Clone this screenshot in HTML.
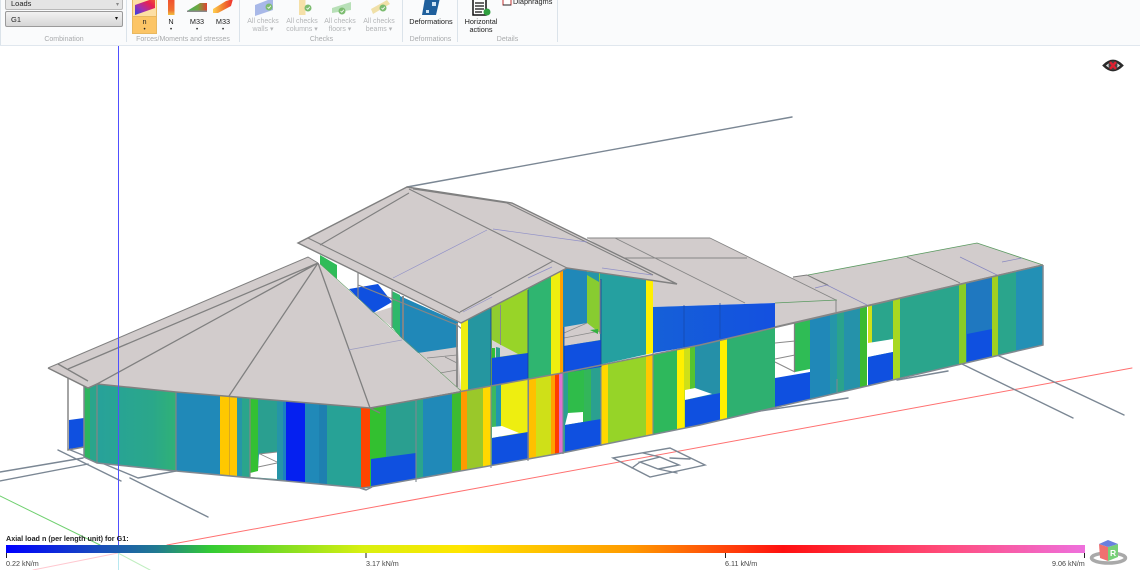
<!DOCTYPE html>
<html><head><meta charset="utf-8"><style>
html,body{margin:0;padding:0;background:#fff}
#p{position:relative;width:1140px;height:570px;overflow:hidden;background:#fff;font-family:"Liberation Sans",sans-serif;filter:blur(.3px)}
#tb{position:absolute;left:0;top:0;width:1140px;height:45px;background:#fafbfc;border-bottom:1.5px solid #e0e7ee;box-sizing:content-box}
.t{position:absolute;font-size:7.300px;line-height:8px;color:#222;text-align:center;white-space:nowrap}
.d{color:#b4b6b8;font-size:7px}
.g{color:#a9abad;font-size:7px}
.sep{position:absolute;top:0;width:1px;height:42px;background:#dbe3ea}
.dd{position:absolute;left:5px;width:118px;border:1px solid #9a9a9a;border-radius:2px;background:linear-gradient(#f2f2f2,#d6d6d6);box-sizing:border-box;font-size:7.500px;color:#222;padding-left:5px}
svg{position:absolute;left:0;top:0}
</style></head><body><div id="p">
<svg width="1140" height="570" viewBox="0 0 1140 570">
<defs>
<linearGradient id="lg" x1="0" x2="1" y1="0" y2="0">
<stop offset="0" stop-color="#0000ff"/><stop offset=".09" stop-color="#1a50b8"/><stop offset=".14" stop-color="#207a90"/><stop offset=".19" stop-color="#33cc33"/><stop offset=".33" stop-color="#d8f010"/><stop offset=".42" stop-color="#ffe600"/><stop offset=".58" stop-color="#ff9a00"/><stop offset=".72" stop-color="#ff1010"/><stop offset=".87" stop-color="#ff4c7c"/><stop offset="1" stop-color="#ee70dd"/>
</linearGradient>
<linearGradient id="w1" x1="0" x2="1" y1="0" y2="0"><stop offset="0" stop-color="#27a29a"/><stop offset=".7" stop-color="#2aa78a"/><stop offset="1" stop-color="#30b276"/></linearGradient>
<linearGradient id="w2" x1="0" x2="1" y1="0" y2="0"><stop offset="0" stop-color="#1560d8"/><stop offset="1" stop-color="#1450e0"/></linearGradient>
<linearGradient id="ni" x1="0" x2="1" y1="1" y2="0"><stop offset="0" stop-color="#3040e0"/><stop offset=".35" stop-color="#a030b0"/><stop offset=".7" stop-color="#e82050"/><stop offset="1" stop-color="#f06030"/></linearGradient>
<linearGradient id="nv" x1="0" x2="0" y1="0" y2="1"><stop offset="0" stop-color="#f05030"/><stop offset=".7" stop-color="#f07030"/><stop offset="1" stop-color="#f0c040"/></linearGradient>
<linearGradient id="m1" x1="0" x2="1" y1="0" y2="0"><stop offset="0" stop-color="#40b060"/><stop offset=".55" stop-color="#70a840"/><stop offset="1" stop-color="#e04030"/></linearGradient>
<linearGradient id="m2" x1="0" x2="1" y1="0" y2="0"><stop offset="0" stop-color="#ffd050"/><stop offset=".5" stop-color="#f08030"/><stop offset="1" stop-color="#f03030"/></linearGradient>
<clipPath id="ca"><polygon points="84,386 97,384 176,392 370,408 370,487 362,488 176,471 97,463 84,457"/></clipPath>
<clipPath id="cb"><polygon points="370,408 562,373 700,345 1043,265 1043,345 700,425 562,453 370,487"/></clipPath>
<clipPath id="cu"><polygon points="461,323 568,268 653,281 653,353 562,373 461,392"/></clipPath>
</defs>

<!-- ground lines -->
<g fill="none" stroke-linecap="round">
<path d="M1132 368L167 545" stroke="#ff7070" stroke-width="1"/>
<path d="M118 553L33 570" stroke="#ffc8d0" stroke-width="1"/>
<path d="M0 496L100 545" stroke="#70d070" stroke-width="1"/>
<path d="M118 553L150 570" stroke="#c0eec0" stroke-width="1"/>
<g stroke="#7b8794" stroke-width="1.400">
<path d="M407 187L792 117"/>
<path d="M58 450L121 481M68 449L138 478M130 478L208 517M138 478L176 471M0 472L83 458M0 481L88 464"/>
<path d="M962 364L1073 418M997 355L1124 415"/>
<path d="M720 417L848 398M897 380L948 371"/>
<path d="M613 458L670 448 705 465 650 477ZM640 462L660 457 679 465 658 469ZM643 453L660 457M632 468L640 462M658 469L677 473M670 458L690 459"/>
</g>
</g>

<!-- far left column -->
<polygon points="69,420 84,418 84,447 69,449" fill="#0f50e0"/>
<path d="M68 378V450L84 447" stroke="#868686" stroke-width="1.500" fill="none"/>

<!-- Rear parts behind the hip -->
<polygon points="320,255 337,265 337,279 320,264" fill="#2fbc58"/>
<polygon points="349,289 378,284 392,302 373,313" fill="#0f50e0"/>
<polygon points="373,313 392,307 392,327" fill="#d2cccc"/>
<polygon points="392,291 400,295 400,337 392,327" fill="#2eb86a"/>
<polygon points="400,296 458,322 458,352 418,353 400,337" fill="#2088b8"/>
<polygon points="418,353 458,347 461,392" fill="#d2cccc"/>
<path d="M358 273V298M392 290V328M358 285L457 325 472 337" stroke="#868686" stroke-width="1.200" fill="none"/>
<path d="M403 296V340M457 323V387M472 337V397L460 390" stroke="#868686" stroke-width="1.800" fill="none"/>
<path d="M427 358L457 355M440 373L457 370M445 357L457 363" stroke="#868686" stroke-width=".8" fill="none"/>

<!-- back right roof -->
<polygon points="587,238 710,238 837,300 837,308 775,327 775,303 653,307 653,281" fill="#d2cccc"/>
<polygon points="793,277 808,275 977,243 1043,265 775,327" fill="#d2cccc"/>
<polygon points="653,307 775,303 775,327 700,345 653,353" fill="url(#w2)"/>
<path d="M684 305V347M720 303V338" stroke="#1848a8" stroke-width=".7"/>
<path d="M710 238L836 300M587 238H710M615 238L745 303M623 258H747" stroke="#868686" stroke-width=".9" fill="none"/>
<path d="M775 303L837 300M808 275L977 243 1043 265" stroke="#5a9a60" stroke-width=".8" fill="none"/>
<path d="M793 277L807 275 828 285M807 275L829 286M836 300V312M907 257L960 283" stroke="#7c7c7c" stroke-width=".9" fill="none"/>
<path d="M815 288L827 285 867 305M960 257L997 275M1002 262L1022 258" stroke="#8888c0" stroke-width=".7" fill="none"/>
<path d="M775 327L1043 265" stroke="#868686" stroke-width="1.600" fill="none"/>

<!-- Ground floor right walls -->
<g clip-path="url(#cb)" shape-rendering="crispEdges">
<rect x="370" y="340" width="16" height="160" fill="#33c030"/>
<rect x="386" y="340" width="30" height="160" fill="#2a9f90"/>
<rect x="416" y="340" width="7" height="160" fill="#2aa58c"/>
<rect x="423" y="340" width="29" height="160" fill="#2089b8"/>
<rect x="452" y="340" width="9" height="160" fill="#3dbb30"/>
<rect x="461" y="340" width="6" height="160" fill="#ff9a00"/>
<rect x="467" y="340" width="16" height="160" fill="#9ac82a"/>
<rect x="483" y="340" width="8" height="160" fill="#ffd800"/>
<rect x="491" y="340" width="5" height="160" fill="#3cb860"/>
<rect x="496" y="340" width="5" height="160" fill="#2296b0"/>
<rect x="501" y="340" width="27" height="160" fill="#eeee10"/>
<rect x="528" y="340" width="1" height="160" fill="#808080"/>
<rect x="529" y="340" width="7" height="160" fill="#ffc000"/>
<rect x="536" y="340" width="15" height="160" fill="#cfe018"/>
<rect x="551" y="340" width="4" height="160" fill="#ffa000"/>
<rect x="555" y="340" width="4" height="160" fill="#ff3c00"/>
<rect x="559" y="340" width="4" height="160" fill="#e070d0"/>
<rect x="563" y="340" width="5" height="160" fill="#2aa090"/>
<rect x="568" y="340" width="16" height="160" fill="#2fbc4a"/>
<rect x="584" y="340" width="7" height="160" fill="#33b65a"/>
<rect x="591" y="340" width="10" height="160" fill="#2aa090"/>
<rect x="601" y="340" width="7" height="160" fill="#ffd800"/>
<rect x="608" y="340" width="38" height="160" fill="#96d428"/>
<rect x="646" y="340" width="7" height="160" fill="#ffc800"/>
<rect x="653" y="320" width="24" height="160" fill="#2eb85c"/>
<rect x="677" y="320" width="7" height="160" fill="#fff000"/>
<rect x="684" y="320" width="6" height="160" fill="#cfe018"/>
<rect x="690" y="320" width="5" height="160" fill="#55c430"/>
<rect x="695" y="320" width="25" height="160" fill="#2590a8"/>
<rect x="720" y="300" width="7" height="160" fill="#fff000"/>
<rect x="727" y="300" width="48" height="160" fill="#2eb070"/>
<rect x="775" y="300" width="20" height="160" fill="#fff"/>
<rect x="795" y="300" width="15" height="160" fill="#2fbc55"/>
<rect x="810" y="280" width="20" height="160" fill="#2088b8"/>
<rect x="830" y="280" width="7" height="160" fill="#2596a8"/>
<rect x="837" y="280" width="7" height="160" fill="#2aa38c"/>
<rect x="844" y="280" width="16" height="160" fill="#2592aa"/>
<rect x="860" y="280" width="7" height="160" fill="#3cbb30"/>
<rect x="868" y="280" width="4" height="160" fill="#cfe018"/>
<rect x="872" y="280" width="21" height="160" fill="#2aa58c"/>
<rect x="893" y="260" width="7" height="160" fill="#a8d820"/>
<rect x="900" y="260" width="59" height="160" fill="#2aa58c"/>
<rect x="959" y="250" width="7" height="160" fill="#88cc28"/>
<rect x="966" y="250" width="26" height="160" fill="#1f78c0"/>
<rect x="992" y="250" width="6" height="160" fill="#a0d020"/>
<rect x="998" y="250" width="18" height="160" fill="#2aa58c"/>
<rect x="1016" y="250" width="27" height="160" fill="#2390b5"/>
</g>
<g clip-path="url(#cb)">
<polygon points="371,459 416,453 416,500 371,500" fill="#0f50e0"/>
<polygon points="492,427 502,426 519,433 492,438" fill="#fff"/>
<polygon points="492,438 528,432 528,480 492,480" fill="#0f50e0"/>
<polygon points="568,413 583,412 583,422 565,425" fill="#fff"/>
<polygon points="565,425 601,419 601,470 565,470" fill="#0f50e0"/>
<polygon points="685,390 695,388 712,394 685,400" fill="#fff"/>
<polygon points="685,400 720,393 720,440 685,450" fill="#0f50e0"/>
<polygon points="795,372 810,369 810,372 795,376" fill="#fff"/>
<polygon points="775,378 810,372 810,420 775,420" fill="#0f50e0"/>
<polygon points="868,343 893,339 893,352 868,357" fill="#fff"/>
<polygon points="868,357 893,352 893,400 868,400" fill="#0f50e0"/>
<polygon points="967,334 992,329 992,380 967,380" fill="#0f50e0"/>
<path d="M775 343L795 341M775 359L795 355M775 362L795 372" stroke="#8a8a8a" stroke-width="1"/>
</g>
<path d="M794.500 323V372" stroke="#808080" stroke-width="1.300"/>
<path d="M837 379V392" stroke="#808890" stroke-width="1"/>
<path d="M416 398V482M491 387V468M528 380V461M563 373V454M601 365V446M653 353V434" stroke="#808890" stroke-width="1.100"/>

<!-- gable upper walls -->
<g clip-path="url(#cu)" shape-rendering="crispEdges">
<rect x="461" y="260" width="7" height="140" fill="#eeee10"/>
<rect x="468" y="260" width="23" height="140" fill="#2596a0"/>
<rect x="491" y="260" width="10" height="140" fill="#90cc30"/>
<rect x="501" y="260" width="27" height="140" fill="#98d428"/>
<rect x="528" y="260" width="23" height="140" fill="#2fb570"/>
<rect x="551" y="260" width="9" height="140" fill="#eeee10"/>
<rect x="560" y="260" width="3" height="140" fill="#ffa000"/>
<rect x="563" y="260" width="24" height="140" fill="#2088b8"/>
<rect x="587" y="260" width="13" height="140" fill="#88cc30"/>
<rect x="600" y="260" width="46" height="140" fill="#25a0a0"/>
<rect x="646" y="260" width="7" height="140" fill="#fff000"/>
</g>
<polygon points="587,272 599,272 599,282 587,275" fill="#2596a8"/>
<polygon points="564,327 587,323 600,333 600,340 564,346" fill="#d2cccc"/>
<path d="M564 338L600 331M587 323L564 333" stroke="#8a8a8a" stroke-width=".7"/>
<polygon points="590,330 598,329 598,334" fill="#33b040"/>
<polygon points="492,340 501,345 518,354 492,358" fill="#d8d4d4"/>
<polygon points="492,348 495,348 495,358 492,358" fill="#33c033"/>
<polygon points="496,347 500,348 500,357 496,358" fill="#2aa090"/>
<polygon points="492,358 528,353 528,379 492,386" fill="#0f50e0"/>
<polygon points="564,346 601,340 601,367 564,373" fill="#0f50e0"/>
<path d="M564 327V373M528 290V379M601 279V367M491 305V386" stroke="#1c3f98" stroke-width=".8" fill="none"/>
<path d="M500.500 305V345M600 280V334" stroke="#8a8a8a" stroke-width="1" fill="none"/>

<!-- left wall -->
<g clip-path="url(#ca)" shape-rendering="crispEdges">
<rect x="84" y="370" width="6" height="125" fill="#2db55f"/>
<rect x="90" y="370" width="7" height="125" fill="#2aa58c"/>
<rect x="97" y="370" width="79" height="125" fill="url(#w1)"/>
<rect x="176" y="370" width="44" height="125" fill="#2089b8"/>
<rect x="220" y="370" width="17" height="125" fill="#ffc800"/>
<rect x="229" y="370" width="1" height="125" fill="#d8a820"/>
<rect x="237" y="370" width="5" height="125" fill="#2696a8"/>
<rect x="242" y="370" width="8" height="125" fill="#2aa58c"/>
<rect x="250" y="370" width="8" height="125" fill="#33c033"/>
<rect x="258" y="370" width="19" height="125" fill="#2a9f90"/>
<rect x="277" y="370" width="6" height="125" fill="#2595a8"/>
<rect x="283" y="370" width="3" height="125" fill="#1c80c0"/>
<rect x="286" y="370" width="19" height="125" fill="#0520f0"/>
<rect x="305" y="370" width="14" height="125" fill="#2089b8"/>
<rect x="319" y="370" width="8" height="125" fill="#1e80b0"/>
<rect x="327" y="370" width="34" height="125" fill="#27a296"/>
<rect x="361" y="370" width="9" height="125" fill="#ff4400"/>
</g>
<polygon points="250,473 258,471 259,454 277,452 277,479 250,477" fill="#fff"/>
<path d="M258 467L277 463M260 454L277 462M259 454L277 452" stroke="#8a8a8a" stroke-width=".9" fill="none"/>
<path d="M84 386V457L97 463 176 471 362 488 370 487 562 453 700 425 1043 345V265" stroke="#808890" stroke-width="1.500" fill="none"/>
<path d="M97 384V463M176 392V471M250 398V477" stroke="#868686" stroke-width="1.200"/>
<path d="M370 408L562 373 700 345 1043 265" stroke="#868686" stroke-width="1.500" fill="none"/>
<path d="M360 488L366 490 372 487" stroke="#808890" stroke-width="1.500" fill="none"/>

<!-- hip roof -->
<polygon points="48,368 308,257 318,263 460,391 370,408 176,392 97,384 88,388" fill="#d2cccc"/>
<g fill="none" stroke="#808080">
<path d="M48 368L308 257 318 263" stroke-width="1"/>
<path d="M48 368L88 388 97 384 176 392 370 408 460 392" stroke-width="1.500"/>
<path d="M318 263L97 384M318 263L68 369M318 263L229 396M318 263L370 408 380 413M58 364L88 381" stroke-width="1.300"/>
<path d="M348 350L402 340" stroke="#9c9cc0" stroke-width=".7"/>
<path d="M320 264L460 390" stroke="#6a9a6a" stroke-width=".6"/>
</g>

<!-- main roof -->
<polygon points="298,243 407,187 512,203 677,284 567,268 461,323" fill="#d2cccc"/>
<g fill="none" stroke="#808080">
<path d="M298 243L407 187 512 203 677 284 567 268 461 323 298 243Z" stroke-width="1.400"/>
<path d="M308 238L460 313M320 245L409 193M409 189L567 268M413 189L507 203 653 275M460 312L553 261 567 268" stroke-width="1.100"/>
<path d="M393 278L487 230M493 229L587 242M463 312L492 297M528 278L552 267M602 268L652 275" stroke="#9090c8" stroke-width=".7"/>
</g>

<!-- vertical blue guide -->
<path d="M118.500 46V553" stroke="#5050ff" stroke-width="1"/>
<path d="M118.500 553V570" stroke="#b8e8f0" stroke-width="1"/>

<!-- legend -->
<rect x="6" y="545" width="1079" height="8" fill="url(#lg)"/>
<path d="M6.500 553V558M366 553V558M725.500 553V558M1084.500 553V558" stroke="#222" stroke-width="1"/>
<text x="6" y="541" font-size="7.200" font-weight="700" fill="#222" font-family="Liberation Sans">Axial load n (per length unit) for G1:</text>
<text x="6" y="566" font-size="7.200" fill="#444" font-family="Liberation Sans">0.22 kN/m</text>
<text x="366" y="566" font-size="7.200" fill="#444" font-family="Liberation Sans">3.17 kN/m</text>
<text x="725" y="566" font-size="7.200" fill="#444" font-family="Liberation Sans">6.11 kN/m</text>
<text x="1052" y="566" font-size="7.200" fill="#444" font-family="Liberation Sans">9.06 kN/m</text>

<!-- cube -->
<ellipse cx="1108.500" cy="558" rx="17" ry="5" fill="none" stroke="#a9a9a9" stroke-width="3.500"/>
<polygon points="1099,544 1108,547 1108,561 1100,558" fill="#f07070"/>
<polygon points="1108,547 1118,544 1118,557 1108,561" fill="#78d078"/>
<polygon points="1099,544 1108,540 1118,544 1108,547" fill="#6a80e0"/>
<text x="1110" y="556" font-size="8.500" font-weight="700" fill="#fff" font-family="Liberation Sans">R</text>

<!-- eye -->
<path d="M1104 65.500Q1113 56.500 1122 65.500 1113 74.500 1104 65.500Z" fill="#ddd" stroke="#2a2a2a" stroke-width="2.600"/>
<circle cx="1113" cy="65.500" r="4.500" fill="#444"/>
<path d="M1110 62L1116 69M1116 62L1110 69" stroke="#e02030" stroke-width="2.400"/>
</svg>

<div id="tb"></div>
<div style="position:absolute;left:0;top:0;width:1px;height:45px;background:#dbe3ea"></div>
<div class="dd" style="top:-4px;height:14px;line-height:14px;padding-left:5px;background:#e4e4e4;border-color:#b8b8b8">Loads</div>
<div class="t" style="left:116px;top:1px;color:#888;font-size:6px">▾</div>
<div class="dd" style="top:11px;height:16px;line-height:15px">G1</div>
<div class="t" style="left:115px;top:15px;font-size:6px;color:#111">▾</div>
<div class="sep" style="left:126px"></div>
<div class="sep" style="left:239px"></div>
<div class="sep" style="left:402px"></div>
<div class="sep" style="left:457px"></div>
<div class="sep" style="left:557px"></div>

<div style="position:absolute;left:132px;top:-3px;width:25px;height:37px;background:#fddfa4;border:1px solid #e8b860;border-radius:1px;box-sizing:border-box"></div>
<div style="position:absolute;left:132px;top:16px;width:25px;height:18px;background:#fcc566;border:1px solid #e8b860;box-sizing:border-box"></div>

<svg width="1140" height="46" viewBox="0 0 1140 46">
<!-- n -->
<polygon points="135,5 155,-2 155,8 135,15" fill="url(#ni)"/>
<!-- N -->
<rect x="168" y="-1" width="6.500" height="16" fill="url(#nv)"/>
<!-- M33 a -->
<polygon points="187,11 200,3 207,3 207,11" fill="url(#m1)"/>
<rect x="187" y="10.500" width="20" height="1.500" fill="#8a8a8a"/>
<!-- M33 b -->
<polygon points="213,9 226,1 233,-1 231,6 218,13 213,13" fill="url(#m2)"/>
<!-- checks -->
<polygon points="255,5 273,-2 273,10 255,16" fill="#a8b8e8"/>
<circle cx="269" cy="7" r="3.500" fill="#7cbc70"/><path d="M267.500 7L268.800 8.300 270.800 5.800" stroke="#fff" fill="none" stroke-width=".8"/>
<rect x="299" y="-2" width="6.500" height="17" fill="#f5e0a8"/>
<circle cx="308" cy="8" r="3.500" fill="#7cbc70"/><path d="M306.500 8L307.800 9.300 309.800 6.800" stroke="#fff" fill="none" stroke-width=".8"/>
<polygon points="332,8 351,2 351,10 332,13" fill="#b8e0b8"/>
<circle cx="342" cy="11" r="3.500" fill="#7cbc70"/><path d="M340.500 11L341.800 12.300 343.800 9.800" stroke="#fff" fill="none" stroke-width=".8"/>
<polygon points="371,9 387,0 390,4 373,14" fill="#f0e0a8"/>
<circle cx="383" cy="8" r="3.500" fill="#7cbc70"/><path d="M381.500 8L382.800 9.300 384.800 6.800" stroke="#fff" fill="none" stroke-width=".8"/>
<!-- deformations -->
<polygon points="425,-2 440,-2 436,15 422,15" fill="#1f5f9c"/>
<rect x="432" y="2" width="4" height="4" fill="#cfe4f5"/>
<rect x="426" y="10" width="3" height="3" fill="#cfe4f5"/>
<!-- horizontal actions -->
<rect x="473" y="-3" width="13" height="18" fill="#fff" stroke="#111" stroke-width="1.500"/>
<path d="M475 3H484M475 6H484M475 9H484M475 12H482" stroke="#111" stroke-width="1.200"/>
<circle cx="487" cy="12" r="3.500" fill="#30a040"/>
<!-- diaphragms -->
<rect x="503" y="-2" width="8" height="7" fill="#fff" stroke="#c03030" stroke-width="1"/>
<path d="M503 5H511" stroke="#222"/>
</svg>

<div class="t" style="left:132px;top:17.500px;width:25px">n</div>
<div class="t" style="left:132px;top:26px;width:25px;font-size:6px">•</div>
<div class="t" style="left:161px;top:17.500px;width:20px">N</div>
<div class="t" style="left:161px;top:26px;width:20px;font-size:6px">•</div>
<div class="t" style="left:185px;top:17.500px;width:24px">M33</div>
<div class="t" style="left:185px;top:26px;width:24px;font-size:6px">•</div>
<div class="t" style="left:211px;top:17.500px;width:24px">M33</div>
<div class="t" style="left:211px;top:26px;width:24px;font-size:6px">•</div>
<div class="t d" style="left:244px;top:17.500px;width:38px">All checks<br>walls ▾</div>
<div class="t d" style="left:282px;top:17.500px;width:40px">All checks<br>columns ▾</div>
<div class="t d" style="left:321px;top:17.500px;width:38px">All checks<br>floors ▾</div>
<div class="t d" style="left:360px;top:17.500px;width:38px">All checks<br>beams ▾</div>
<div class="t" style="left:406px;top:17.500px;width:50px">Deformations</div>
<div class="t" style="left:458px;top:17.500px;width:46px">Horizontal<br>actions</div>
<div class="t" style="left:513px;top:-2px;text-align:left">Diaphragms</div>
<div class="t g" style="left:5px;top:36px;width:118px">Combination</div>
<div class="t g" style="left:127px;top:36px;width:112px">Forces/Moments and stresses</div>
<div class="t g" style="left:240px;top:36px;width:163px">Checks</div>
<div class="t g" style="left:404px;top:36px;width:53px">Deformations</div>
<div class="t g" style="left:458px;top:36px;width:99px">Details</div>
</div></body></html>
